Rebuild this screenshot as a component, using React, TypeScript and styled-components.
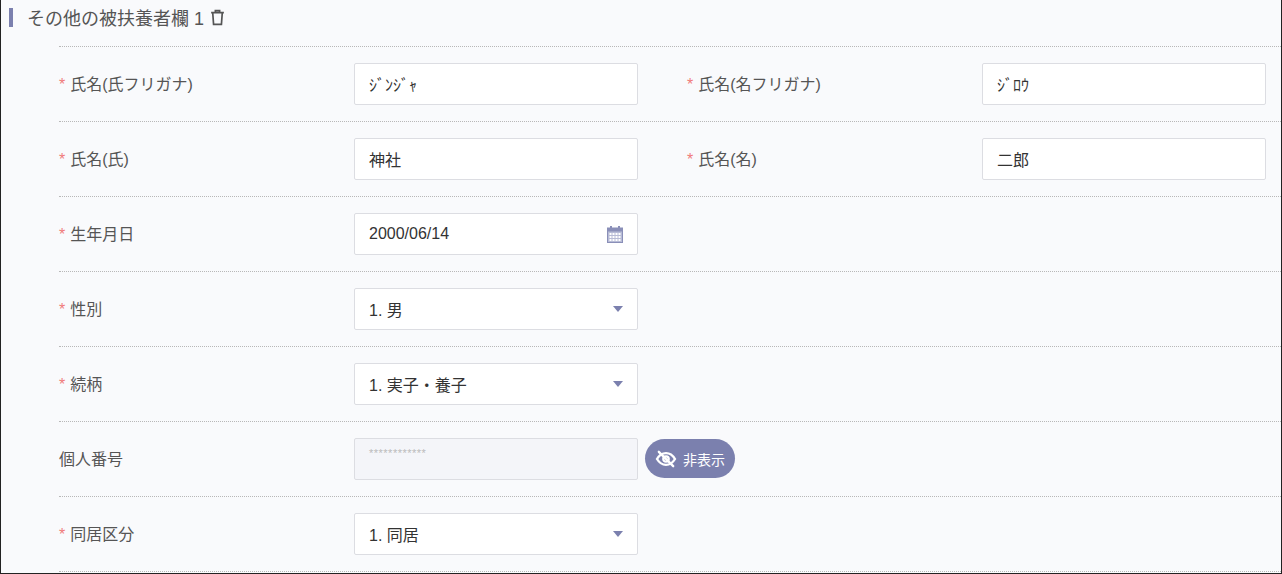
import React from "react";
import styled, { createGlobalStyle } from "styled-components";

const G = createGlobalStyle`
  body{margin:0;font-family:"Liberation Sans","Noto Sans CJK JP",sans-serif;background:#fff;}
`;
const Frame = styled.div`
  width:1282px;height:574px;box-sizing:border-box;border:1px solid #222;border-top:none;
  background:#f9fafc;overflow:hidden;
`;
const Header = styled.div`
  display:flex;align-items:center;gap:6px;height:34px;padding-left:8px;color:#555;font-size:18px;
`;
const Bar = styled.span`width:4px;height:19px;background:#7b80ae;margin-right:8px;`;
const Body = styled.div`padding:12px 0 0 58px;`;
const Row = styled.div`
  display:grid;grid-template-columns:295px 284px 49px 295px 284px;height:75px;
  border-top:1px dotted #b8b8b8;box-sizing:border-box;padding-top:16px;
`;
const Label = styled.div`font-size:16px;color:#555;padding-top:8px;`;
const Req = styled.span`color:#f07a7a;margin-right:5px;`;
const Field = styled.div<{ $disabled?: boolean }>`
  height:42px;box-sizing:border-box;border:1px solid #dcdde2;border-radius:2px;
  background:${p => (p.$disabled ? "#f4f5f9" : "#fff")};display:flex;align-items:center;
  justify-content:space-between;padding:0 14px 0 14px;font-size:16px;color:#333;
`;
const Stars = styled.span`color:#bbb;font-size:11px;letter-spacing:0.5px;margin-top:-12px;`;
const Caret = styled.span`width:0;height:0;border-left:5px solid transparent;border-right:5px solid transparent;border-top:6px solid #7b80ae;`;
const Pill = styled.button`
  position:absolute;left:7px;top:1px;height:39px;width:90px;border:none;border-radius:20px;background:#7b80ae;
  color:#fff;font-size:14px;display:flex;align-items:center;justify-content:center;gap:6px;font-family:inherit;
`;
const Cell = styled.div`position:relative;`;

const Cal = () => (
  <svg width="16" height="17" viewBox="0 0 16 17"><rect x="0.5" y="2" width="15" height="14.5" fill="#b8bcd6" stroke="#8a8fb8" /><rect x="0.5" y="2" width="15" height="3.5" fill="#8a8fb8" /><rect x="3" y="0" width="2" height="4" fill="#8a8fb8" /><rect x="11" y="0" width="2" height="4" fill="#8a8fb8" />{[7, 10, 13].map(y => [2, 5, 8, 11].map(x => <rect key={x + "-" + y} x={x + 0.5} y={y} width="2" height="2" fill="#fff" />))}</svg>
);
const Trash = () => (
  <svg width="15" height="17" viewBox="0 0 14 16" fill="none" stroke="#555" strokeWidth="1.6"><path d="M1 3.5h12M5 3.5V1.5h4v2M2.5 3.5l.8 11h7.4l.8-11" /></svg>
);
const EyeOff = () => (
  <svg width="22" height="18" viewBox="0 0 24 20" fill="none" stroke="#fff" strokeWidth="2.6" strokeLinecap="round"><path d="M2 10c3-5 7-6.5 10-6.5S19 5 22 10c-3 5-7 6.5-10 6.5S5 15 2 10z" /><circle cx="12" cy="10" r="3" /><path d="M4 2l16 16" /></svg>
);

const L = ({ t, r = true }: { t: string; r?: boolean }) => <Label>{r && <Req>*</Req>}{t}</Label>;

export default function App() {
  return (
    <Frame>
      <G />
      <Header><Bar />その他の被扶養者欄 1 <Trash /></Header>
      <Body>
        <Row><L t="氏名(氏フリガナ)" /><Field>ｼﾞﾝｼﾞｬ</Field><span /><L t="氏名(名フリガナ)" /><Field>ｼﾞﾛｳ</Field></Row>
        <Row><L t="氏名(氏)" /><Field>神社</Field><span /><L t="氏名(名)" /><Field>二郎</Field></Row>
        <Row><L t="生年月日" /><Field>2000/06/14<Cal /></Field></Row>
        <Row><L t="性別" /><Field>1. 男<Caret /></Field></Row>
        <Row><L t="続柄" /><Field>1. 実子・養子<Caret /></Field></Row>
        <Row><L t="個人番号" r={false} /><Field $disabled><Stars>************</Stars></Field><Cell><Pill><EyeOff />非表示</Pill></Cell></Row>
        <Row><L t="同居区分" /><Field>1. 同居<Caret /></Field></Row>
        <Row />
      </Body>
    </Frame>
  );
}
